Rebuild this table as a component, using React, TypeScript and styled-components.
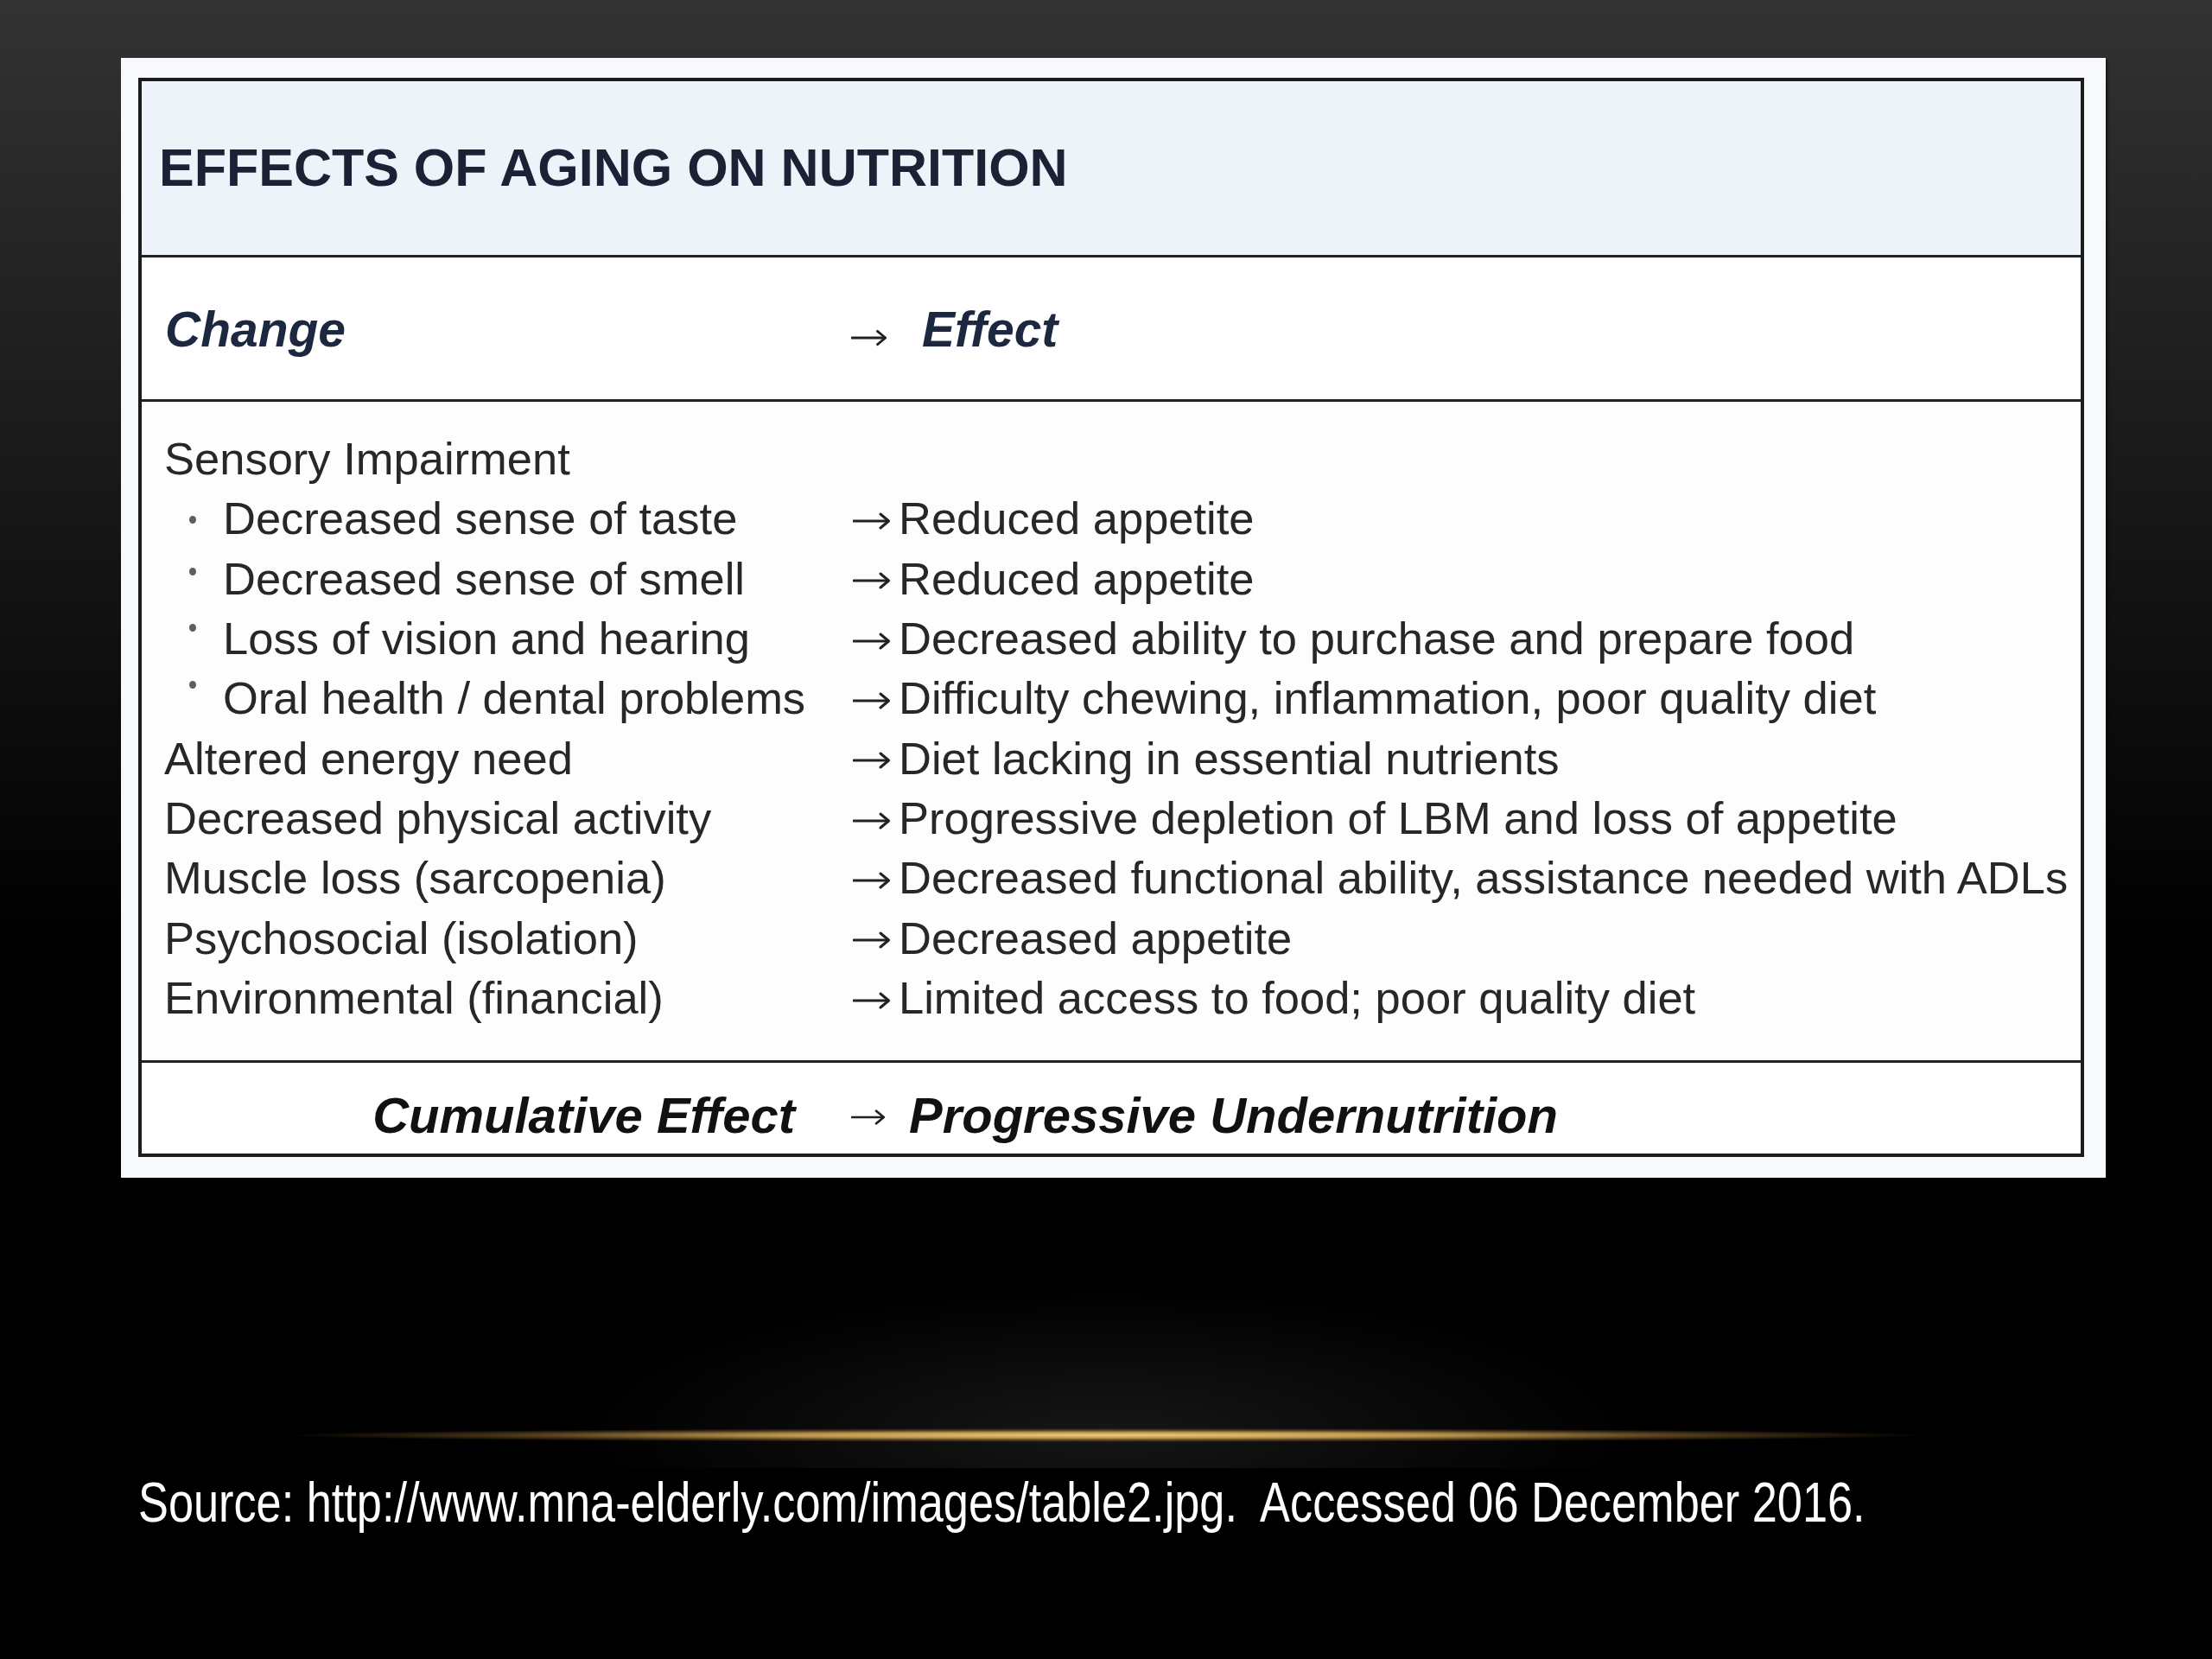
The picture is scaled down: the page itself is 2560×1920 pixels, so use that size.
import React from "react";
import styled, { createGlobalStyle } from "styled-components";

const GlobalStyle = createGlobalStyle`
  html, body {
    margin: 0;
    padding: 0;
    background: #000;
  }
  * { box-sizing: border-box; }
`;

const Slide = styled.div`
  width: 2560px;
  height: 1920px;
  display: flex;
  flex-direction: column;
  align-items: flex-start;
  padding: 67px 0 0 140px;
  background: linear-gradient(180deg, #333333 0px, #242424 300px, #121212 700px, #000000 1100px);
  font-family: "Liberation Sans", Arial, sans-serif;
  overflow: hidden;
`;

const Panel = styled.div`
  width: 2297px;
  height: 1296px;
  padding: 23px 25px 24px 20px;
  background: #f7f9fc;
  box-shadow: 2px 2px 3px rgba(0, 0, 0, 0.6);
`;

const Table = styled.div`
  width: 2252px;
  height: 1249px;
  border: 4px solid #1c1c1c;
  display: flex;
  flex-direction: column;
  background: #fff;
`;

const TitleBand = styled.div`
  height: 204px;
  flex: none;
  display: flex;
  align-items: center;
  padding: 0 0 2px 20px;
  background: #eef3fa;
  border-bottom: 3px solid #222;
`;

const Title = styled.h1`
  margin: 0;
  font-size: 61px;
  font-weight: 700;
  color: #1b2235;
  letter-spacing: 0;
  white-space: nowrap;
`;

const HeaderRow = styled.div`
  display: grid;
  grid-template-columns: 821px 1fr;
  align-items: center;
  height: 167px;
  flex: none;
  border-bottom: 3px solid #222;
  padding-top: 2px;
`;

const HeaderCell = styled.div<{ $pad?: number }>`
  display: flex;
  align-items: center;
  padding-left: ${(p) => p.$pad ?? 0}px;
  white-space: nowrap;
`;

const HeaderText = styled.span`
  font-size: 57px;
  font-weight: 700;
  font-style: italic;
  color: #1c2840;
`;

const Body = styled.div`
  flex: 1;
  padding: 31px 0 0 0;
  background: #fdfdfd;
  border-bottom: 3px solid #222;
  display: flex;
  flex-direction: column;
`;

const BodyRow = styled.div`
  display: grid;
  grid-template-columns: 821px 1fr;
  align-items: center;
  height: 69.33px;
  flex: none;
`;

const Cell = styled.div`
  display: flex;
  align-items: center;
  white-space: nowrap;
  font-size: 52.5px;
  line-height: 69px;
  color: #272727;
`;

const ChangeCell = styled(Cell)`
  padding-left: 26px;
`;

const Bullet = styled.span<{ $lift: number }>`
  flex: none;
  width: 8px;
  height: 9px;
  border-radius: 50%;
  background: #5e5e5e;
  margin: 0 31px 0 29px;
  transform: translateY(${(p) => 2 - p.$lift}px);
`;

const ArrowBox = styled.span<{ $w: number; $lead: number; $dy: number }>`
  flex: none;
  display: inline-flex;
  align-items: center;
  width: ${(p) => p.$w}px;
  padding-left: ${(p) => p.$lead}px;
  transform: translateY(${(p) => p.$dy}px);
  svg {
    display: block;
  }
`;

const Arrow = ({ w, lead = 2, dy = 0, size = 44 }: { w: number; lead?: number; dy?: number; size?: number }) => (
  <ArrowBox $w={w} $lead={lead} $dy={dy}>
    <svg width={size} height="24" viewBox="0 0 44 24" fill="none" aria-hidden="true">
      <path d="M1 12 H41" stroke="#222" strokeWidth="3" strokeLinecap="round" />
      <path d="M32 4 L41.5 12 L32 20" stroke="#222" strokeWidth="3" strokeLinecap="round" strokeLinejoin="round" />
    </svg>
  </ArrowBox>
);

const FooterRow = styled.div`
  display: grid;
  grid-template-columns: 821px 1fr;
  align-items: center;
  flex: none;
  height: 105px;
  padding-top: 16px;
`;

const FooterLeft = styled.div`
  display: flex;
  justify-content: flex-end;
  padding-right: 65px;
  white-space: nowrap;
`;

const FooterText = styled.span`
  font-size: 58px;
  font-weight: 700;
  font-style: italic;
  color: #111;
`;

const GlowArea = styled.div`
  width: 2560px;
  margin-left: -140px;
  height: 336px;
  flex: none;
  display: flex;
  flex-direction: column;
  justify-content: flex-end;
  align-items: center;
  padding-bottom: 30px;
  background: radial-gradient(ellipse 620px 170px at 50% 88%, rgba(40, 40, 40, 0.55), rgba(20, 20, 20, 0) 100%);
`;

const GoldLine = styled.div`
  width: 1900px;
  height: 16px;
  background: radial-gradient(
    ellipse closest-side,
    rgba(240, 204, 125, 1) 0%,
    rgba(205, 165, 85, 0.9) 40%,
    rgba(150, 110, 50, 0.5) 72%,
    rgba(80, 60, 20, 0) 100%
  );
`;

const Source = styled.p`
  margin: 0 0 0 20px;
  font-size: 64px;
  line-height: 80px;
  color: #fff;
  white-space: nowrap;
  display: inline-block;
  transform: scaleX(0.817);
  transform-origin: left center;
`;

type Item = { change: string; effect?: string; bullet?: boolean; lift?: number };

const items: Item[] = [
  { change: "Sensory Impairment" },
  { change: "Decreased sense of taste", effect: "Reduced appetite", bullet: true, lift: 0 },
  { change: "Decreased sense of smell", effect: "Reduced appetite", bullet: true, lift: 10 },
  { change: "Loss of vision and hearing", effect: "Decreased ability to purchase and prepare food", bullet: true, lift: 14 },
  { change: "Oral health / dental problems", effect: "Difficulty chewing, inflammation, poor quality diet", bullet: true, lift: 17 },
  { change: "Altered energy need", effect: "Diet lacking in essential nutrients" },
  { change: "Decreased physical activity", effect: "Progressive depletion of LBM and loss of appetite" },
  { change: "Muscle loss (sarcopenia)", effect: "Decreased functional ability, assistance needed with ADLs" },
  { change: "Psychosocial (isolation)", effect: "Decreased appetite" },
  { change: "Environmental (financial)", effect: "Limited access to food; poor quality diet" },
];

export default function App() {
  return (
    <>
      <GlobalStyle />
      <Slide>
        <Panel>
          <Table>
            <TitleBand>
              <Title>EFFECTS OF AGING ON NUTRITION</Title>
            </TitleBand>
            <HeaderRow>
              <HeaderCell $pad={27}>
                <HeaderText>Change</HeaderText>
              </HeaderCell>
              <HeaderCell>
                <Arrow w={82} lead={0} dy={10} size={42} />
                <HeaderText>Effect</HeaderText>
              </HeaderCell>
            </HeaderRow>
            <Body>
              {items.map((it) => (
                <BodyRow key={it.change}>
                  <ChangeCell>
                    {it.bullet && <Bullet $lift={it.lift ?? 0} />}
                    {it.change}
                  </ChangeCell>
                  <Cell>
                    {it.effect && (
                      <>
                        <Arrow w={55} lead={2} dy={3} size={44} />
                        {it.effect}
                      </>
                    )}
                  </Cell>
                </BodyRow>
              ))}
            </Body>
            <FooterRow>
              <FooterLeft>
                <FooterText>Cumulative Effect</FooterText>
              </FooterLeft>
              <HeaderCell>
                <Arrow w={67} lead={0} dy={2} size={40} />
                <FooterText>Progressive Undernutrition</FooterText>
              </HeaderCell>
            </FooterRow>
          </Table>
        </Panel>
        <GlowArea>
          <GoldLine />
        </GlowArea>
        <Source>Source: http://www.mna-elderly.com/images/table2.jpg.&nbsp; Accessed 06 December 2016.</Source>
      </Slide>
    </>
  );
}
